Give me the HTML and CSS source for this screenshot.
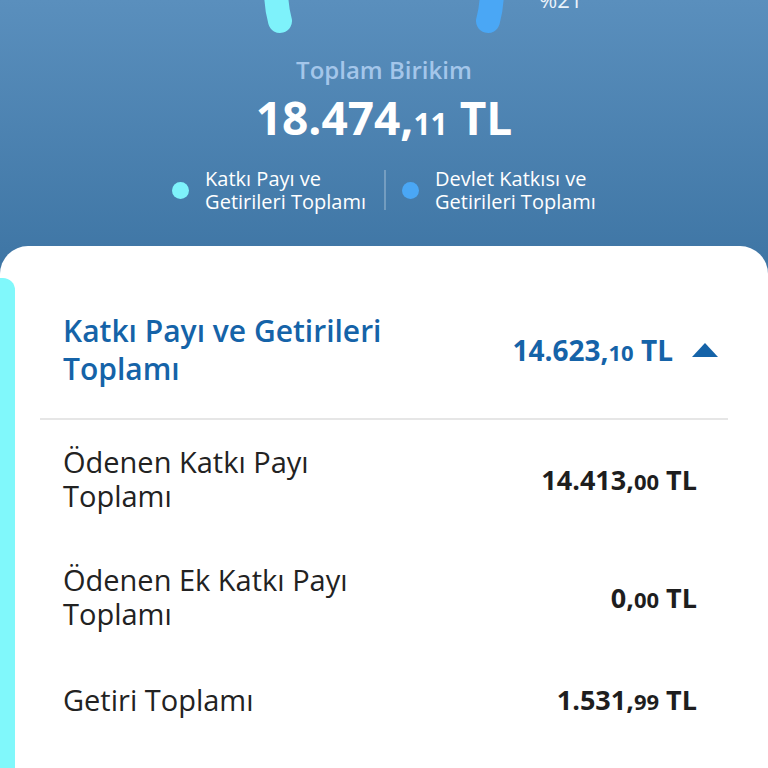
FILE: index.html
```html
<!DOCTYPE html>
<html lang="tr">
<head>
    <meta charset="UTF-8">
    <meta name="viewport" content="width=device-width, initial-scale=1.0">
    <title>Birikim</title>
    <link rel="stylesheet" href="styles.css">
</head>
<body>
    <div class="screen">
        <!-- Üst bölüm: toplam birikim -->
        <header class="summary">
            <svg class="gauge" width="400" height="40" viewBox="0 0 400 40">
                <path d="M96 21 A107.7 107.7 0 0 1 146 -100" fill="none" stroke="#7ef2fb" stroke-width="24" stroke-linecap="round"/>
                <path d="M304 21 A107.7 107.7 0 0 0 254 -100" fill="none" stroke="#4aa7f5" stroke-width="24" stroke-linecap="round"/>
                <text x="355" y="8" class="gauge-label">%21</text>
            </svg>
            <div class="summary-title">Toplam Birikim</div>
            <div class="summary-amount">18.474,<span class="cents">11</span> TL</div>

            <div class="legend">
                <div class="legend-item">
                    <span class="dot dot-cyan"></span>
                    <span>Katkı Payı ve<br>Getirileri Toplamı</span>
                </div>
                <span class="legend-divider"></span>
                <div class="legend-item">
                    <span class="dot dot-blue"></span>
                    <span>Devlet Katkısı ve<br>Getirileri Toplamı</span>
                </div>
            </div>
        </header>

        <!-- Detay kartı -->
        <main class="card">
            <section class="group">
                <div class="accent"></div>
                <div class="group-body">
                    <div class="group-head">
                        <h2 class="group-title">Katkı Payı ve Getirileri<br>Toplamı</h2>
                        <div class="group-total">
                            <span>14.623,<span class="cents">10</span> TL</span>
                            <svg class="caret" width="28" height="16" viewBox="0 0 28 16">
                                <path d="M14 1 L27 15 L1 15 Z" fill="#1563a8"/>
                            </svg>
                        </div>
                    </div>

                    <div class="row">
                        <div class="row-label">Ödenen Katkı Payı<br>Toplamı</div>
                        <div class="row-value">14.413,<span class="cents">00</span> TL</div>
                    </div>
                    <div class="row">
                        <div class="row-label">Ödenen Ek Katkı Payı<br>Toplamı</div>
                        <div class="row-value">0,<span class="cents">00</span> TL</div>
                    </div>
                    <div class="row">
                        <div class="row-label">Getiri Toplamı</div>
                        <div class="row-value">1.531,<span class="cents">99</span> TL</div>
                    </div>
                </div>
            </section>
        </main>
    </div>
</body>
</html>
```

FILE: styles.css
```css
/* Genel */
body {
    margin: 0;
    padding: 0;
    font-family: "Open Sans", "Noto Sans", sans-serif;
    background: #ffffff;
}

.screen {
    width: 768px;
    height: 768px;
    overflow: hidden;
    background: linear-gradient(#5a8fbd 0px, #3f76a5 260px, #3f76a5 100%);
}

/* Üst özet */
.summary {
    display: flex;
    flex-direction: column;
    align-items: center;
    color: #ffffff;
    padding-bottom: 33px;
}

.gauge {
    display: block;
}

.gauge-label {
    font-size: 22px;
    fill: #eaf2fa;
}

.summary-title {
    margin-top: 17px;
    font-size: 24px;
    line-height: 26px;
    font-weight: 600;
    color: #a4c6ea;
}

.summary-amount {
    margin-top: 8px;
    font-size: 46px;
    line-height: 52px;
    font-weight: 700;
}

.cents {
    line-height: 1;
}

.summary-amount .cents {
    font-size: 30px;
}

.legend {
    margin-top: 24px;
    display: flex;
    align-items: center;
    font-size: 20px;
    line-height: 23px;
}

.legend-item {
    display: flex;
    align-items: center;
    gap: 16px;
}

.dot {
    width: 17px;
    height: 17px;
    border-radius: 50%;
}

.dot-cyan {
    background: #7ef2fb;
}

.dot-blue {
    background: #4aa7f5;
}

.legend-divider {
    width: 2px;
    height: 40px;
    margin: 0 16px 0 18px;
    background: rgba(255, 255, 255, 0.25);
}

/* Kart */
.card {
    background: #ffffff;
    border-radius: 28px 28px 0 0;
    min-height: 600px;
    padding-top: 32px;
}

.group {
    display: flex;
}

.accent {
    width: 15px;
    min-height: 500px;
    background: #80f8fb;
    border-radius: 0 12px 0 0;
}

.group-body {
    flex: 1;
    margin: 0 40px 0 25px;
}

.group-head {
    display: flex;
    justify-content: space-between;
    align-items: center;
    padding: 34px 9px 30px 23px;
    border-bottom: 2px solid #e6e6e6;
}

.group-title {
    margin: 0;
    font-size: 30px;
    line-height: 38px;
    font-weight: 600;
    color: #1563a8;
}

.group-total {
    display: flex;
    align-items: center;
    gap: 18px;
    font-size: 28px;
    font-weight: 700;
    color: #1563a8;
}

.group-total .cents {
    font-size: 22px;
}

.caret {
    display: block;
}

.row {
    display: flex;
    justify-content: space-between;
    align-items: center;
    padding: 25px 31px 25px 23px;
}

.row-label {
    font-size: 29px;
    line-height: 34px;
    color: #222222;
}

.row-value {
    font-size: 27px;
    font-weight: 700;
    color: #1e1e1e;
}

.row-value .cents {
    font-size: 22px;
}
```
